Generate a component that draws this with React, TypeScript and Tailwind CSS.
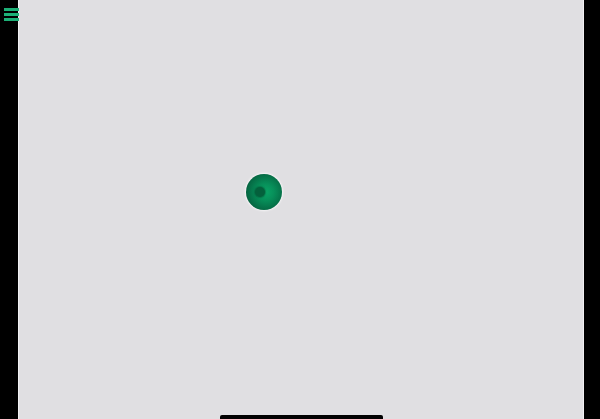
import React from "react";

export default function App() {
  return (
    <div className="relative flex h-[419px] w-[600px] overflow-hidden bg-black">
      <div className="w-[18px] shrink-0 bg-black" />
      <div className="relative flex-1 border-x border-[#f2f1f4] bg-[#e0dfe2]">
        <div
          className="absolute left-[227px] top-[174px] h-[36px] w-[36px] rounded-full shadow-[0_0_2px_1px_rgba(255,255,255,0.7)]"
          style={{
            background:
              "radial-gradient(circle at 55% 50%, #0aa466 0%, #07905a 30%, #056a44 68%, #023f29 100%)",
          }}
        >
          <div className="absolute left-[9px] top-[13px] h-[10px] w-[10px] rounded-full bg-[#04603c] shadow-[0_0_1px_1px_rgba(4,90,56,0.5)]" />
        </div>
      </div>
      <div className="w-[16px] shrink-0 bg-black" />
      <div className="absolute left-[4px] top-[8px] flex w-[15px] flex-col gap-[2px]">
        <div className="h-[3px] bg-[#1db077]" />
        <div className="h-[3px] bg-[#1db077]" />
        <div className="h-[3px] bg-[#1db077]" />
      </div>
      <div className="absolute bottom-0 left-[220px] h-[4px] w-[163px] rounded-t-[2px] bg-black" />
    </div>
  );
}
